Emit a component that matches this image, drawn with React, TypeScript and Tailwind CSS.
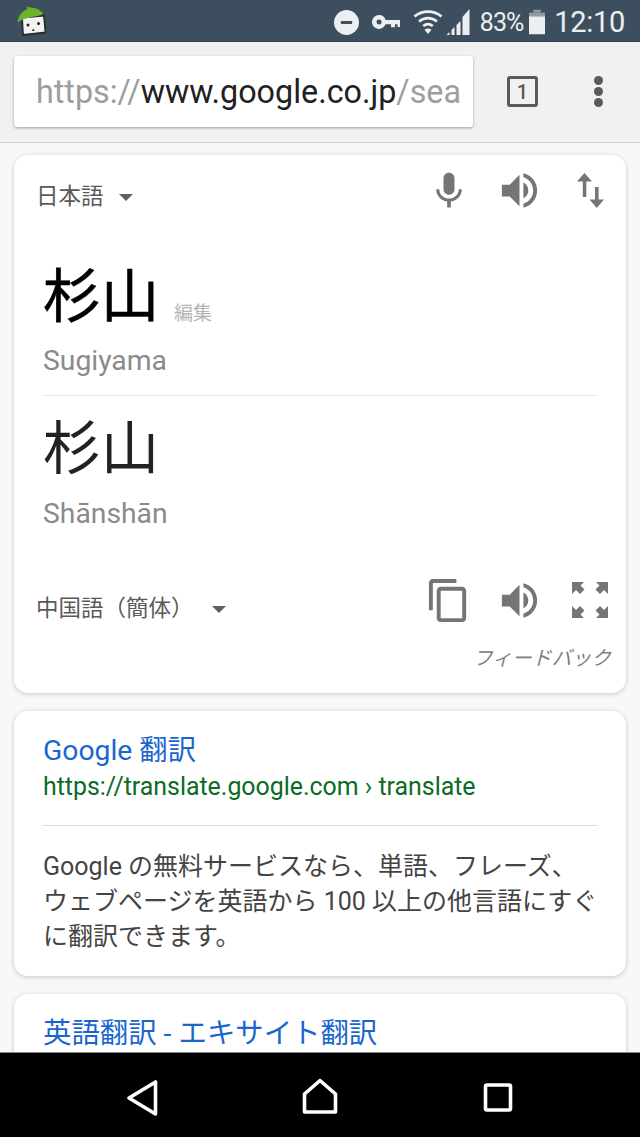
const cjk = "font-['Roboto','Noto_Sans_CJK_JP',sans-serif]";

function Speaker() {
  return (
    <svg viewBox="0 0 24 24" className="w-[47px] h-[47px]" fill="#757575">
      <path d="M3 9v6h4l5 5V4L7 9H3zm13.500 3c0-1.770-1.020-3.290-2.500-4.030v8.050c1.480-.73 2.500-2.250 2.500-4.020zM14 3.230v2.060c2.890.86 5 3.540 5 6.710s-2.110 5.850-5 6.710v2.060c4.010-.91 7-4.490 7-8.770s-2.990-7.860-7-8.770z" />
    </svg>
  );
}

function Caret() {
  return <span className="ml-[15px] w-0 h-0 border-x-[7.500px] border-x-transparent border-t-[7px] border-t-[#5f5f5f]" />;
}

function Logo() {
  return (
    <svg viewBox="16 6 32 30" className="w-[32px] h-[30px]">
      <path d="M22 17.500L44 15.500L45.500 32.500L23 35z" fill="#f2f2f2" stroke="#2a2a2a" strokeWidth="1.800" strokeLinejoin="round" />
      <circle cx="28" cy="25" r="1.500" fill="#222" />
      <circle cx="38.500" cy="23.500" r="1.500" fill="#222" />
      <path d="M31.800 31l1.500-2.200 1.500 2z" fill="#222" />
      <path d="M17.500 22.500C18 15 23.500 10.500 27.500 9L26 6.500L29.500 7.500C35 7.500 40 9.500 43 13.500C42.500 15 38 16 33 16.800C27 17.800 21.500 19.500 17.500 22.500z" fill="#6ab42c" />
    </svg>
  );
}

function Slot({ children }: { children: React.ReactNode }) {
  return <div className="w-[71px] flex justify-center">{children}</div>;
}

export default function App() {
  return (
    <div className={`w-[640px] h-[1137px] flex flex-col overflow-hidden bg-[#f1f1f1] ${cjk}`}>
      {/* status bar */}
      <div className="h-[42px] shrink-0 bg-[#3d4f5f] flex items-center pl-[16px] pr-[15px] border-b border-[#33434f]">
        <Logo />
        <div className="ml-auto flex items-center text-[#eceff1] pt-[3px]">
          <svg viewBox="0 0 26 26" className="w-[25px] h-[25px]">
            <circle cx="13" cy="13" r="13" fill="#eceff1" />
            <rect x="7" y="11.500" width="12" height="3" rx="1" fill="#3d4f5f" />
          </svg>
          <svg viewBox="0 0 28 14" className="ml-[13px] w-[28px] h-[14px]" fill="#eceff1">
            <path d="M7 0a7 7 0 1 0 6.600 9.300H19v3h4v-3h2.500v2.700h2.500V5H13.600A7 7 0 0 0 7 0zm0 4.500a2.500 2.500 0 1 1 0 5 2.500 2.500 0 0 1 0-5z" />
          </svg>
          <svg viewBox="0 0 30 26" className="ml-[13px] w-[30px] h-[26px]" fill="none" stroke="#eceff1" strokeWidth="2.600">
            <path d="M1.500 7.500C9 1 21 1 28.500 7.500" />
            <path d="M6 12.500c5.500-4.500 12.500-4.500 18 0" />
            <path d="M10.200 17c3-2.400 6.600-2.400 9.600 0" />
            <path d="M15 25l-3.500-4.300c2-1.500 5-1.500 7 0z" fill="#eceff1" stroke="none" />
          </svg>
          <svg viewBox="0 0 24 26" className="ml-[3px] w-[25px] h-[26px]" fill="#eceff1">
            <path d="M0 26l3-3v3zM5 26v-5l3-3v8zM10 26V16l4-4v14zM16 26V8l7-8v26z" />
          </svg>
          <span className="ml-[9px] text-[25px] leading-none font-['Roboto'] tracking-[-1px]">83%</span>
          <svg viewBox="0 0 17 26" className="ml-[6px] w-[16px] h-[26px]">
            <rect x="4.500" y="0" width="8" height="3" fill="#8f9aa3" />
            <rect x="0" y="3" width="17" height="4" fill="#8f9aa3" />
            <rect x="0" y="7" width="17" height="19" fill="#eceff1" />
          </svg>
          <span className="ml-[9px] text-[29px] leading-none font-['Roboto'] tracking-[-0.3px]">12:10</span>
        </div>
      </div>

      {/* toolbar */}
      <div className="h-[101px] shrink-0 bg-[#f1f1f1] border-b border-[#cfcfcf] flex items-center pl-[14px] pb-[1px]">
        <div className="w-[459px] h-[71px] bg-white rounded-[3px] shadow-[0_1px_3px_rgba(0,0,0,0.35)] pl-[22px] flex items-center">
          <div className="whitespace-nowrap text-[32.300px] mt-[2px] font-['Roboto'] text-[#9e9e9e]">
            https://<span className="text-[#212121]">www.google.co.jp</span>/sea
          </div>
        </div>
        <div className="ml-[34px] w-[31px] h-[31px] border-[3px] border-[#5a5a5a] rounded-[3px] flex items-center justify-center text-[20px] font-medium text-[#5a5a5a] font-['Roboto']">
          1
        </div>
        <div className="ml-[56px] flex flex-col gap-[2.500px]">
          <span className="w-[8.500px] h-[8.500px] rounded-full bg-[#5a5a5a]" />
          <span className="w-[8.500px] h-[8.500px] rounded-full bg-[#5a5a5a]" />
          <span className="w-[8.500px] h-[8.500px] rounded-full bg-[#5a5a5a]" />
        </div>
      </div>

      {/* content */}
      <div className="flex-1 min-h-0 overflow-hidden bg-[#f8f8f8] px-[14px] pt-[12px] flex flex-col gap-[18px]">
        {/* translate card */}
        <div className="h-[538px] shrink-0 bg-white rounded-[14px] shadow-[0_1px_5px_rgba(0,0,0,0.2)] flex flex-col">
          <div className="h-[70px] pl-[22px] flex items-center">
            <span className="text-[22.500px] text-[#5a5a5a] flex items-center mt-[14px]">日本語<Caret /></span>
            <div className="ml-auto flex items-center mt-[1px]">
              <Slot>
                <svg viewBox="0 0 24 24" className="w-[44px] h-[44px]" fill="#757575">
                  <path d="M12 14c1.660 0 2.990-1.340 2.990-3L15 5c0-1.660-1.340-3-3-3S9 3.340 9 5v6c0 1.660 1.340 3 3 3zm5.300-3c0 3-2.540 5.100-5.300 5.100S6.700 14 6.700 11H5c0 3.410 2.720 6.230 6 6.720V21h2v-3.280c3.280-.48 6-3.300 6-6.720h-1.700z" />
                </svg>
              </Slot>
              <Slot><Speaker /></Slot>
              <Slot>
                <svg viewBox="0 0 28 35" className="w-[28px] h-[35px]" fill="#757575">
                  <path d="M7.500 0L15 8.500H9.300V24H5.800V8.500H0z" />
                  <path d="M19.800 35L27 26.500H21.600V14H18V26.500H12.500z" />
                </svg>
              </Slot>
            </div>
          </div>
          <div className="px-[29px]">
            <div className="flex items-end text-[58px] leading-[66px] text-black mt-[39px] [-webkit-text-stroke:0.6px_black]">
              杉山
              <span className="ml-[15px] mb-[4px] text-[19px] leading-[24px] text-[#b5b5b5] [-webkit-text-stroke:0px]">編集</span>
            </div>
            <div className="text-[28.300px] leading-[36px] text-[#8a8a8a] mt-[13px] font-['Roboto']">Sugiyama</div>
            <div className="h-px bg-[#e6e6e6] mt-[16px]" />
            <div className="text-[58px] leading-[66px] text-[#222222] mt-[20px]">杉山</div>
            <div className="text-[28.300px] leading-[36px] text-[#8a8a8a] mt-[14px] font-['Roboto']">Shānshān</div>
          </div>
          <div className="h-[60px] mt-[38px] pl-[22px] flex items-center">
            <span className="text-[22.500px] text-[#5a5a5a] flex items-center mt-[18px]">中国語（簡体）<span className="ml-[3px] flex items-center"><Caret /></span></span>
            <div className="ml-auto flex items-center">
              <Slot>
                <svg viewBox="0 0 24 24" className="w-[47px] h-[47px]" fill="#757575">
                  <path d="M16 1H4c-1.100 0-2 .9-2 2v14h2V3h12V1zm3 4H8c-1.100 0-2 .9-2 2v14c0 1.100.9 2 2 2h11c1.100 0 2-.9 2-2V7c0-1.100-.9-2-2-2zm0 16H8V7h11v14z" />
                </svg>
              </Slot>
              <Slot><Speaker /></Slot>
              <Slot>
                <svg viewBox="0 0 36 36" className="w-[36px] h-[36px] mr-[2px]" fill="#757575">
                  <path d="M0 0h12L8.500 3.500 12.500 7.500 8 12 4 8 0 12z" />
                  <path d="M36 0H24l3.500 3.500L23.500 7.500 28 12 32 8 36 12z" />
                  <path d="M0 36h12L8.500 32.500 12.500 28.500 8 24 4 28 0 24z" />
                  <path d="M36 36H24l3.500-3.500-4-4L28 24l4 4 4-4z" />
                </svg>
              </Slot>
            </div>
          </div>
          <div className="mt-[16px] pr-[15px] leading-[26px] text-right text-[19.800px] italic text-[#808080]">フィードバック</div>
        </div>

        {/* result 1 */}
        <div className="h-[265px] shrink-0 bg-white rounded-[14px] shadow-[0_1px_5px_rgba(0,0,0,0.2)] px-[29px] pt-[22px]">
          <div className="text-[28.300px] leading-[36px] text-[#1a66d0]">Google 翻訳</div>
          <div className="mt-[2px] text-[24.900px] leading-[32px] text-[#0b6b24] font-['Roboto'] whitespace-nowrap">https://translate.google.com › translate</div>
          <div className="h-px bg-[#dddddd] mt-[22px]" />
          <div className="mt-[23px] text-[25px] leading-[35px] text-[#444444] whitespace-nowrap">
            Google の無料サービスなら、単語、フレーズ、<br />
            ウェブページを英語から 100 以上の他言語にすぐ<br />
            に翻訳できます。
          </div>
        </div>

        {/* result 2 */}
        <div className="h-[200px] shrink-0 bg-white rounded-[14px] shadow-[0_1px_5px_rgba(0,0,0,0.2)] px-[29px] pt-[22px]">
          <div className="text-[28.400px] leading-[36px] text-[#1a66d0] whitespace-nowrap">英語翻訳 - エキサイト翻訳</div>
        </div>
      </div>

      {/* nav bar */}
      <div className="h-[85px] shrink-0 bg-black border-t border-[#8a8a8a] flex items-center">
        <svg viewBox="0 0 640 84" className="w-[640px] h-[84px]" fill="none" stroke="white" strokeWidth="3.600" strokeLinejoin="round">
          <path d="M155.500 29v32L129 45z" />
          <path d="M304.500 59V41L320 27.500L335.500 41V59z" />
          <rect x="485.500" y="32" width="25" height="25" rx="1.500" />
        </svg>
      </div>
    </div>
  );
}
